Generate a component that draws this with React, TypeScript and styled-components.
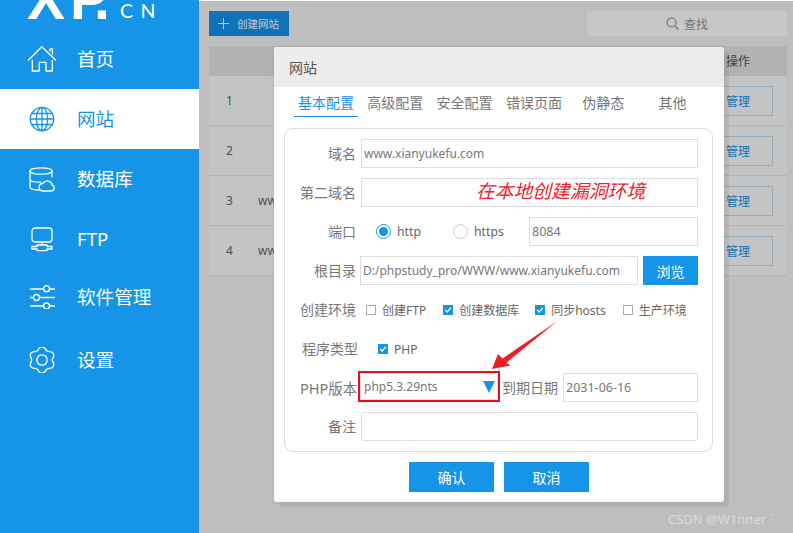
import React from "react";
import styled, { createGlobalStyle } from "styled-components";

const Global = createGlobalStyle`
  html, body { margin: 0; padding: 0; background: #bfbfbf; }
  * { box-sizing: border-box; }
  body { font-family: "Noto Sans", "Noto Sans CJK SC", sans-serif; }
`;

const BLUE = "#1594e8";
const Root = styled.div`position: relative; width: 793px; height: 533px; overflow: hidden; display: flex;`;

const Sidebar = styled.aside`width: 199px; height: 533px; background: ${BLUE}; overflow: hidden; flex: none;`;
const Logo = styled.div`height: 29px; padding-left: 27px; display: flex; align-items: flex-start; color: #fff; overflow: hidden;`;
const LogoMark = styled.div`font: 700 57px/18px "Liberation Sans", sans-serif; height: 18px; margin-top: -10px; flex: none; display: flex;`;
const LogoLetter = styled.span<{ $ls: number }>`margin-right: ${(p) => p.$ls}px;`;
const LogoTail = styled.div`font: 400 19.5px/18px "Lato", sans-serif; letter-spacing: 7.5px; margin: 2px 0 0 10px; flex: none;`;
const NavItem = styled.div<{ $active?: boolean; $h?: number }>`
  height: ${(p) => p.$h ?? 60}px; display: flex; align-items: center; padding-left: 28px;
  background: ${(p) => (p.$active ? "#fff" : "transparent")};
  color: ${(p) => (p.$active ? BLUE : "#fff")};
`;
const NavIcon = styled.div`width: 28px; display: flex; justify-content: center; margin-right: 21px; flex: none;`;
const NavText = styled.span`font-size: 18.6px; line-height: 26px; margin-top: -1px; white-space: nowrap;`;

const Main = styled.main`flex: 1; background: #f4f4f4; border-top: 1px solid #fff; padding: 10px 6px 0 10px; display: flex; flex-direction: column;`;
const Toolbar = styled.div`display: flex; justify-content: space-between; height: 25px; margin-bottom: 10px;`;
const CreateBtn = styled.div`width: 80px; background: ${BLUE}; color: #fff; display: flex; align-items: center; padding-left: 9px; gap: 8px; font-size: 10.5px;`;
const Search = styled.div`width: 200px; background: #fff; color: #999; display: flex; align-items: center; justify-content: center; gap: 5px; font-size: 12px;`;
const HeadRow = styled.div`height: 30px; background: #e4e4e4; display: flex; align-items: center; justify-content: flex-end; color: #555; font-size: 12px; padding-right: 37px;`;
const Row = styled.div`height: 50px; background: #fcfcfc; border-bottom: 1px solid #e8e8e8; display: flex; align-items: center; color: #666; font-size: 12px;`;
const NumCell = styled.div`width: 49px; padding-left: 17px; flex: none;`;
const SiteCell = styled.div`flex: 1;`;
const Manage = styled.div`width: 70px; height: 30px; margin-right: 14px; border: 1px solid #bcdcf2; color: ${BLUE}; display: flex; align-items: center; justify-content: center;`;

const Shade = styled.div`position: absolute; left: 199px; right: 0; top: 1px; bottom: 0; background: rgba(0,0,0,.22);`;
const Modal = styled.section`
  position: absolute; left: 274px; top: 47px; width: 450px; height: 455px; background: #fff; border-radius: 3px;
  box-shadow: 5px 5px 0 rgba(0,0,0,.06), 0 0 5px rgba(0,0,0,.08); overflow: hidden;
`;
const ModalHead = styled.header`height: 40px; background: #ececec; color: #555; font-size: 14px; padding-left: 15px; display: flex; align-items: center;`;
const Tabs = styled.nav`height: 30px; padding-left: 20px; display: flex; gap: 5.3px;`;
const Tab = styled.div<{ $active?: boolean }>`
  width: 64px; text-align: center; font-size: 14px; line-height: 32px; height: 30px;
  color: ${(p) => (p.$active ? BLUE : "#777")};
  border-bottom: 1px solid ${(p) => (p.$active ? BLUE : "transparent")};
`;
const Panel = styled.div`margin: 11px 10px 0; width: 429px; height: 324px; border: 1px solid #ddd; border-radius: 9px; padding: 10px 14px 10px 15px; display: flex; flex-direction: column; gap: 10px;`;
const FormRow = styled.div<{ $h?: number; $gap?: number }>`display: flex; align-items: center; height: ${(p) => p.$h ?? 29}px; gap: ${(p) => p.$gap ?? 5}px;`;
const Label = styled.label<{ $w?: number; $fs?: number }>`
  width: ${(p) => p.$w ?? 56}px; flex: none; text-align: right; white-space: nowrap;
  font-size: ${(p) => p.$fs ?? 14}px; line-height: 20px; color: #777;
`;
const Field = styled.div<{ $w?: number; $r?: number; $fs?: number }>`
  ${(p) => (p.$w ? `width: ${p.$w}px; flex: none;` : "flex: 1;")}
  height: 29px; border: 1px solid #ddd; border-radius: ${(p) => p.$r ?? 0}px; background: #fff;
  padding: 0 2px; color: #777; font-size: ${(p) => p.$fs ?? 12}px; line-height: 27px; white-space: nowrap; overflow: hidden;
`;
const DateField = styled(Field)`margin-left: auto;`;
const Browse = styled.div`width: 55px; height: 29px; margin-left: auto; background: ${BLUE}; color: #fff; font-size: 14px; display: flex; align-items: center; justify-content: center; flex: none;`;
const Radio = styled.span<{ $on?: boolean }>`
  width: 15px; height: 15px; border-radius: 50%; border: 1px solid ${(p) => (p.$on ? BLUE : "#ccc")}; flex: none;
  display: flex; align-items: center; justify-content: center;
  &::after { content: ""; width: 9px; height: 9px; border-radius: 50%; background: ${(p) => (p.$on ? BLUE : "transparent")}; }
`;
const RadioOpt = styled.div<{ $w: number; $pl: number }>`width: ${(p) => p.$w}px; padding-left: ${(p) => p.$pl}px; flex: none; display: flex; align-items: center; gap: 6px; color: #666; font-size: 12.3px; line-height: 16px;`;
const CheckOpt = styled.div<{ $mr?: number }>`display: flex; align-items: center; gap: 6px; margin-right: ${(p) => p.$mr ?? 7}px; color: #666; font-size: 12px; white-space: nowrap;`;
const Box = styled.span<{ $on?: boolean }>`
  width: 10px; height: 10px; flex: none; border: 1px solid ${(p) => (p.$on ? BLUE : "#aaa")};
  background: ${(p) => (p.$on ? BLUE : "#fff")}; display: flex;
`;
const SelectBox = styled.div`
  width: 138px; height: 27px; flex: none; margin-top: -2px; outline: 2px solid #e60f1f; border: 1px solid #ddd; position: relative;
  color: #777; font-size: 12px; line-height: 25px; padding-left: 3px;
`;
const Caret = styled.span`position: absolute; right: 2px; top: 7px; width: 0; height: 0; border-left: 6.5px solid transparent; border-right: 6.5px solid transparent; border-top: 12px solid ${BLUE};`;
const Actions = styled.div`display: flex; justify-content: center; gap: 10px; margin-top: 10px;`;
const ActionBtn = styled.div`width: 85px; height: 30px; background: ${BLUE}; color: #fff; font-size: 14px; display: flex; align-items: center; justify-content: center;`;
const Note = styled.div`position: absolute; left: 476px; top: 177px; font-size: 18.8px; line-height: 28px; font-style: italic; color: #f0202e; white-space: nowrap;`;
const ArrowLayer = styled.svg`position: absolute; left: 0; top: 0; pointer-events: none;`;
const Mark = styled.div`position: absolute; left: 668px; top: 509px; font-size: 13px; line-height: 20px; color: rgba(255,255,255,.45); white-space: nowrap;`;

const line = { fill: "none", stroke: "currentColor", strokeWidth: 1.3, strokeLinecap: "round", strokeLinejoin: "round" } as const;

const gearPath = (() => {
  const pts: string[] = [];
  for (let i = 0; i < 6; i++) {
    const a = (Math.PI / 3) * i - Math.PI / 2;
    const p = (r: number, d: number) => `${(14 + r * Math.cos(a + d)).toFixed(2)} ${(13 + r * Math.sin(a + d)).toFixed(2)}`;
    pts.push(`${i === 0 ? "M" : "Q"}${i === 0 ? "" : p(9.4, -0.52) + " "}${p(11.5, -0.3)} Q${p(15.2, 0)} ${p(11.5, 0.3)}`);
  }
  return pts.join(" ") + ` Q${(14 + 9.4 * Math.cos(-Math.PI / 2 - 0.52)).toFixed(2)} ${(13 + 9.4 * Math.sin(-Math.PI / 2 - 0.52)).toFixed(2)} ${(14 + 11.5 * Math.cos(-Math.PI / 2 - 0.3)).toFixed(2)} ${(13 + 11.5 * Math.sin(-Math.PI / 2 - 0.3)).toFixed(2)}Z`;
})();

const HomeIcon = () => (
  <svg width="28" height="26" viewBox="0 0 28 26" {...line}>
    <path d="M.5 14 13.8.8 27.5 14M22 5V2.8h2.4V8M4.300 14.500V25h7V16.400H18V25h6.300V14.500" />
  </svg>
);
const GlobeIcon = () => (
  <svg width="26" height="26" viewBox="0 0 26 26" {...line}>
    <circle cx="13" cy="13" r="11.7" />
    <ellipse cx="13" cy="13" rx="5.6" ry="11.7" />
    <path d="M13 1.300v23.400M1.300 13h23.400M3 7.500h20M3 18.500h20" />
  </svg>
);
const DbIcon = () => (
  <svg width="26" height="25" viewBox="0 0 26 25" {...line}>
    <ellipse cx="12" cy="4" rx="11" ry="3.2" />
    <path d="M1 4v16c0 2 4 3 10 3M23 4v6M1 12c0 2 4 3.200 11 3.200" />
    <path d="M13 24h9.500a3 3 0 0 0 .8-5.800 5 5 0 0 0-9.300-1.700 3.800 3.800 0 0 0-1 7.500z" />
  </svg>
);
const FtpIcon = () => (
  <svg width="22" height="25" viewBox="0 0 22 25" {...line}>
    <rect x="1" y="1" width="20" height="14" rx="3" />
    <path d="M11 15v3M1 19.500h5V18h10v1.500h5v2.500h-5v1.700H6V22H1z" />
  </svg>
);
const SliderIcon = () => (
  <svg width="25" height="24" viewBox="0 0 25 24" {...line}>
    <path d="M.5 4h13M19.500 4h5M.5 12.500h3M9.500 12.500h15M.5 21h13M19.500 21h5" />
    <circle cx="16.5" cy="3.7" r="3" />
    <circle cx="6.5" cy="12.5" r="3" />
    <circle cx="16.5" cy="21" r="3" />
  </svg>
);
const GearIcon = () => (
  <svg width="28" height="26" viewBox="0 0 28 26" {...line}>
    <path d={gearPath} />
    <circle cx="14" cy="13" r="5.2" />
  </svg>
);
const Tick = () => (
  <svg width="8" height="8" viewBox="0 0 8 8" fill="none" stroke="#fff" strokeWidth="1.3">
    <path d="M1.200 4 3.300 6 6.800 1.800" />
  </svg>
);
const SearchIcon = () => (
  <svg width="13" height="13" viewBox="0 0 13 13" fill="none" stroke="#999" strokeWidth="1.2">
    <circle cx="5.5" cy="5.5" r="4.5" />
    <path d="m9 9 3.500 3.500" />
  </svg>
);
const PlusIcon = () => (
  <svg width="11" height="11" viewBox="0 0 11 11" stroke="#fff" strokeWidth="1">
    <path d="M5.500 0v11M0 5.500h11" />
  </svg>
);

export default function App() {
  return (
    <Root>
      <Global />
      <Sidebar>
        <Logo>
          <LogoMark>
            <LogoLetter $ls={5}>X</LogoLetter>
            <LogoLetter $ls={-14}>P</LogoLetter>
            <span>.</span>
          </LogoMark>
          <LogoTail>CN</LogoTail>
        </Logo>
        <NavItem><NavIcon><HomeIcon /></NavIcon><NavText>首页</NavText></NavItem>
        <NavItem $active><NavIcon><GlobeIcon /></NavIcon><NavText>网站</NavText></NavItem>
        <NavItem><NavIcon><DbIcon /></NavIcon><NavText>数据库</NavText></NavItem>
        <NavItem><NavIcon><FtpIcon /></NavIcon><NavText>FTP</NavText></NavItem>
        <NavItem $h={56}><NavIcon><SliderIcon /></NavIcon><NavText>软件管理</NavText></NavItem>
        <NavItem $h={70}><NavIcon><GearIcon /></NavIcon><NavText>设置</NavText></NavItem>
      </Sidebar>
      <Main>
        <Toolbar>
          <CreateBtn><PlusIcon />创建网站</CreateBtn>
          <Search><SearchIcon />查找</Search>
        </Toolbar>
        <HeadRow>操作</HeadRow>
        {["", "", "www.xianyukefu.com", "www.xianyukefu.com"].map((site, i) => (
          <Row key={i}>
            <NumCell>{i + 1}</NumCell>
            <SiteCell>{site}</SiteCell>
            <Manage>管理</Manage>
          </Row>
        ))}
      </Main>
      <Shade />
      <Modal>
        <ModalHead>网站</ModalHead>
        <Tabs>
          <Tab $active>基本配置</Tab>
          <Tab>高级配置</Tab>
          <Tab>安全配置</Tab>
          <Tab>错误页面</Tab>
          <Tab>伪静态</Tab>
          <Tab>其他</Tab>
        </Tabs>
        <Panel>
          <FormRow><Label>域名</Label><Field>www.xianyukefu.com</Field></FormRow>
          <FormRow><Label>第二域名</Label><Field /></FormRow>
          <FormRow $gap={0}>
            <Label>端口</Label>
            <RadioOpt $w={77} $pl={20}><Radio $on />http</RadioOpt>
            <RadioOpt $w={96} $pl={20}><Radio />https</RadioOpt>
            <Field $fs={12.5}>8084</Field>
          </FormRow>
          <FormRow $gap={4}>
            <Label>根目录</Label>
            <Field $w={278}>D:/phpstudy_pro/WWW/www.xianyukefu.com</Field>
            <Browse>浏览</Browse>
          </FormRow>
          <FormRow $h={30} $gap={10}>
            <Label>创建环境</Label>
            <CheckOpt><Box />创建FTP</CheckOpt>
            <CheckOpt $mr={6}><Box $on><Tick /></Box>创建数据库</CheckOpt>
            <CheckOpt><Box $on><Tick /></Box>同步hosts</CheckOpt>
            <CheckOpt $mr={0}><Box />生产环境</CheckOpt>
          </FormRow>
          <FormRow $h={28} $gap={20}>
            <Label $w={58}>程序类型</Label>
            <CheckOpt><Box $on><Tick /></Box>PHP</CheckOpt>
          </FormRow>
          <FormRow $gap={3}>
            <Label $w={57} $fs={14.5}>PHP版本</Label>
            <SelectBox>php5.3.29nts<Caret /></SelectBox>
            <Label $w={57}>到期日期</Label>
            <DateField $w={135} $fs={12.5}>2031-06-16</DateField>
          </FormRow>
          <FormRow><Label>备注</Label><Field $r={3} /></FormRow>
        </Panel>
        <Actions>
          <ActionBtn>确认</ActionBtn>
          <ActionBtn>取消</ActionBtn>
        </Actions>
      </Modal>
      <Note>在本地创建漏洞环境</Note>
      <ArrowLayer width="793" height="533" viewBox="0 0 793 533">
        <path d="M492 369 498 354 502.500 358.500 557.500 321 506.500 362.500 510.500 365.500Z" fill="#ee1c25" />
      </ArrowLayer>
      <Mark>CSDN @W1nner ˋ</Mark>
    </Root>
  );
}
